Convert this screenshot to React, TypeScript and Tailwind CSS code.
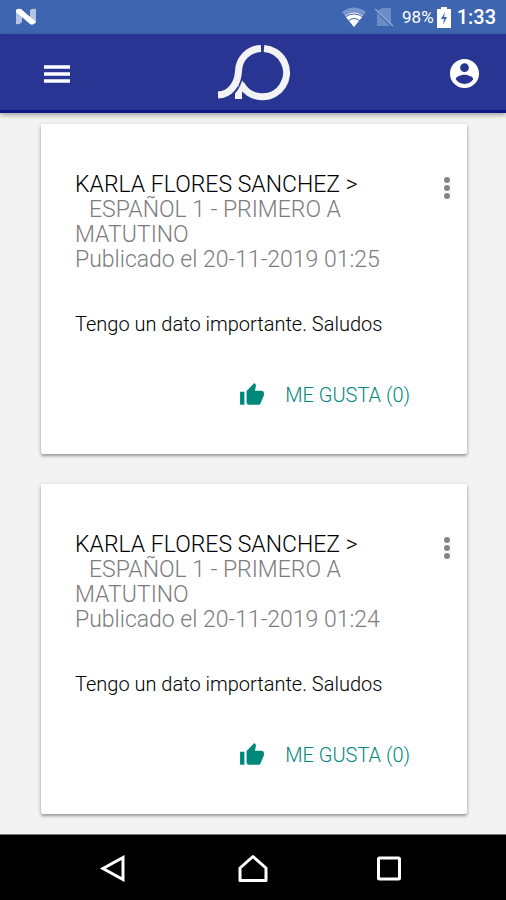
import { useState } from "react";

type Post = { id: number; author: string; group: string; published: string; body: string };

const posts: Post[] = [
  { id: 1, author: "KARLA FLORES SANCHEZ >", group: "ESPAÑOL 1 - PRIMERO A MATUTINO", published: "20-11-2019 01:25", body: "Tengo un dato importante. Saludos" },
  { id: 2, author: "KARLA FLORES SANCHEZ >", group: "ESPAÑOL 1 - PRIMERO A MATUTINO", published: "20-11-2019 01:24", body: "Tengo un dato importante. Saludos" },
];

function StatusBar() {
  return (
    <div className="flex h-[34px] items-center justify-between bg-[#3e65af] pr-[10px] pl-[15px] text-white">
      <svg className="h-[18px] w-[22px]" viewBox="0 0 22 18" aria-hidden="true">
        <path d="M1 2L7 7V14Q4 17 1 16ZM15 2Q18 0 21 1V15L15 10Z" fill="#b4c3e4" />
        <path d="M1 2Q3 0 6 1L21 14Q18 18 15 16L1 4Z" fill="#fff" />
      </svg>
      <div className="flex items-center">
        <svg className="h-5 w-6" viewBox="0 0 24 20" aria-hidden="true">
          <path d="M12 20L0 5Q12 -4 24 5Z" fill="#7896cb" />
          <path d="M12 20L3 9Q12 2 21 9Z" fill="#fff" />
          <path d="M3 10Q12 4 21 10M6 14Q12 9 18 14" fill="none" stroke="#3e65af" />
        </svg>
        <svg className="ml-2 h-5 w-5" viewBox="0 0 20 20" aria-hidden="true">
          <path d="M8 1H17V18L3 4ZM3 6L16 19H3Z" fill="#6c8cc6" />
          <path d="M1 2L19 19" stroke="#8ba5d3" strokeWidth="1.5" />
        </svg>
        <span className="ml-2 text-[17px] leading-5">98%</span>
        <svg className="ml-[3px] h-[21px] w-[14px]" viewBox="0 0 14 21" aria-hidden="true">
          <path d="M4 0H10V2H14V21H0V2H4Z" fill="#fff" />
          <path d="M8 5L4 12H7L6 18L10 10H7Z" fill="#3e65af" />
        </svg>
        <span className="ml-[6px] text-[20px] leading-6 font-medium">1:33</span>
      </div>
    </div>
  );
}

function Logo() {
  return (
    <svg className="h-[57px] w-[74px]" viewBox="0 0 74 57" role="img" aria-label="Logo">
      <g fill="none" stroke="#f3f3f5" strokeWidth="7">
        <path d="M44 4.500C31 5 22 15 21.500 27C21 40 13 50.500 1 51" />
        <path d="M47 4.500A24.200 24.200 0 1 1 24 40" />
      </g>
      <path d="M18 55V49Q23 43 24.500 35L28 42L25 47V55Z" fill="#f3f3f5" />
      <path d="M25.500 32Q23.500 43 17.500 49" fill="none" stroke="#283593" strokeWidth="1.3" />
    </svg>
  );
}

function Header() {
  return (
    <header className="relative flex h-[79px] items-center justify-between border-b-[3px] border-[#0d1682] bg-[#283593] pr-[26px] pl-7 shadow-[0_2px_5px_rgba(0,0,0,0.35)]">
      <button type="button" aria-label="Menú" className="flex size-8 items-center justify-center pt-1 pl-[25px]">
        <svg className="h-[20px] w-[26px] shrink-0" viewBox="0 0 26 20" aria-hidden="true">
          <path d="M0 3H26M0 10H26M0 17H26" stroke="#fff" strokeWidth="3.300" />
        </svg>
      </button>
      <Logo />
      <button type="button" aria-label="Cuenta" className="flex size-8 items-center justify-center pt-[3px]">
        <svg className="size-[35px] shrink-0" viewBox="0 0 24 24" fill="#fff" aria-hidden="true">
          <path d="M12 2C6.480 2 2 6.480 2 12s4.480 10 10 10 10-4.480 10-10S17.520 2 12 2zm0 3c1.660 0 3 1.340 3 3s-1.340 3-3 3-3-1.340-3-3 1.340-3 3-3zm0 14.200c-2.500 0-4.710-1.280-6-3.220.030-1.990 4-3.080 6-3.080 1.990 0 5.970 1.090 6 3.080-1.290 1.940-3.500 3.220-6 3.220z" />
        </svg>
      </button>
    </header>
  );
}

function PostCard({ post }: { post: Post }) {
  const [likes, setLikes] = useState(0);
  return (
    <article className="rounded-[2px] bg-white pt-12 pb-11 pl-[34px] shadow-[0_2px_3px_rgba(0,0,0,0.3),0_1px_5px_rgba(0,0,0,0.14)]">
      <div className="flex items-start justify-between pr-[10px]">
        <div className="text-[23px] leading-[25px] font-light text-[#7c7c7c]">
          <h2 className="text-black">{post.author}</h2>
          <p className="indent-[14px]">{post.group}</p>
          <p>Publicado el {post.published}</p>
        </div>
        <button type="button" aria-label="Opciones" className="flex h-8 w-5 shrink-0 items-center justify-center">
          <svg className="h-6 w-2" viewBox="0 0 8 24" fill="#858585" aria-hidden="true">
            <circle cx="4" cy="4" r="3" />
            <circle cx="4" cy="12" r="3" />
            <circle cx="4" cy="20" r="3" />
          </svg>
        </button>
      </div>
      <p className="mt-[37px] text-[20px] leading-[30px] font-light text-black">{post.body}</p>
      <div className="mt-[41px] flex justify-end pr-[57px]">
        <button type="button" onClick={() => setLikes(likes + 1)} className="flex items-center gap-5 text-[20px] leading-[30px] font-light text-[#00897b]">
          <svg className="size-[26px]" viewBox="0 0 24 24" fill="currentColor" aria-hidden="true">
            <path d="M1 21h4V9H1v12zm22-11c0-1.100-.9-2-2-2h-6.310l.95-4.570.030-.32c0-.41-.17-.79-.44-1.060L14.170 1 7.590 7.590C7.220 7.950 7 8.450 7 9v10c0 1.100.9 2 2 2h9c.83 0 1.540-.5 1.840-1.220l3.020-7.050c.09-.23.14-.47.14-.73v-2z" />
          </svg>
          <span>ME GUSTA ({likes})</span>
        </button>
      </div>
    </article>
  );
}

function NavBar() {
  return (
    <nav className="flex h-[67px] items-center justify-between border-t border-[#777] bg-black pr-[103px] pl-[99px]">
      <button type="button" aria-label="Atrás">
        <svg className="size-7" viewBox="0 0 28 28" fill="none" stroke="#fff" strokeWidth="3" aria-hidden="true">
          <path d="M24 3.500V25.500L4 14.500Z" />
        </svg>
      </button>
      <button type="button" aria-label="Inicio" className="pl-1">
        <svg className="h-7 w-[30px]" viewBox="0 0 30 28" fill="none" stroke="#fff" strokeWidth="3" strokeLinejoin="round" aria-hidden="true">
          <path d="M15 2.500L28 14V26.500H2V14Z" />
        </svg>
      </button>
      <button type="button" aria-label="Recientes">
        <svg className="size-7" viewBox="0 0 28 28" fill="none" stroke="#fff" strokeWidth="3" aria-hidden="true">
          <rect x="3.500" y="4" width="21" height="21" rx="1" />
        </svg>
      </button>
    </nav>
  );
}

export default function App() {
  return (
    <div className="flex min-h-screen flex-col bg-[#f3f3f3] font-[Roboto,sans-serif]">
      <StatusBar />
      <Header />
      <main className="flex grow flex-col gap-[30px] pt-[11px] pr-[39px] pb-5 pl-[41px]">
        {posts.map((post) => (
          <PostCard key={post.id} post={post} />
        ))}
      </main>
      <NavBar />
    </div>
  );
}
